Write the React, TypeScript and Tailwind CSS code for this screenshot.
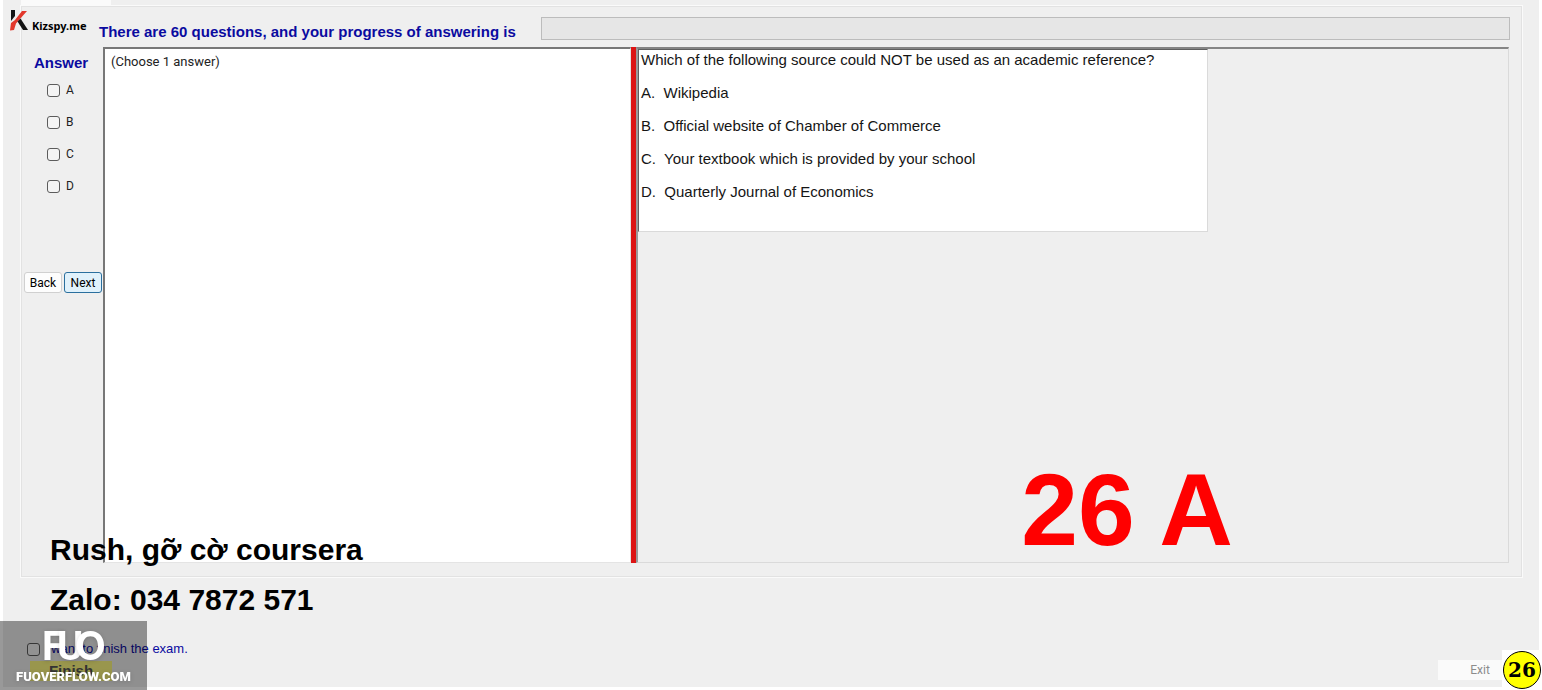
import type { ReactNode } from "react";

const choices = [
  { key: "A", text: "Wikipedia" },
  { key: "B", text: "Official website of Chamber of Commerce" },
  { key: "C", text: "Your textbook which is provided by your school" },
  { key: "D", text: "Quarterly Journal of Economics" },
];

const checkbox =
  "size-[13px] shrink-0 appearance-none rounded-[3px] border border-[#5c5c5c] bg-[#f4f4f4] checked:bg-[#0067c0]";

function KizspyLogo() {
  return (
    <div className="absolute left-[7px] top-[10px] flex items-end gap-1">
      <svg width="18" height="21" viewBox="0 0 18 21" aria-hidden="true">
        <path d="M1 0h4v6l-4 5z" fill="#151515" />
        <path d="M12 1h5L6 13.5 4 20l-4 .5L1 13l4-3z" fill="#e2382c" />
        <path d="M7.500 11.500l3-3L18 20h-5z" fill="#151515" />
      </svg>
      <span className="font-['Noto_Sans',sans-serif] text-[11px] leading-[10px] font-bold text-black">
        Kizspy.me
      </span>
    </div>
  );
}

function AnswerColumn() {
  return (
    <aside className="flex w-[81px] shrink-0 flex-col">
      <h2 className="mt-2 pl-3 text-[15px] leading-4 font-bold text-[#0a0aa0]">Answer</h2>
      <div className="mt-[11px] flex flex-col gap-4 pl-[25px]">
        {choices.map(({ key }) => (
          <label key={key} className="flex h-4 items-center gap-[6px] font-[Roboto,sans-serif] text-[12px] text-[#222]">
            <input type="checkbox" name={`answer-${key}`} className={checkbox} />
            {key}
          </label>
        ))}
      </div>
      <div className="mt-[78px] flex gap-[2px] pl-[2px]">
        <NavButton className="border-[#d0d0d0] bg-[#fdfdfd]">Back</NavButton>
        <NavButton className="border-[#2a6f9e] bg-[#e0f1fb]">Next</NavButton>
      </div>
    </aside>
  );
}

function NavButton({ children, className }: { children: ReactNode; className: string }) {
  return (
    <button
      type="button"
      className={`h-[21px] w-[38px] rounded-[3px] border font-[Roboto,sans-serif] text-[12px] leading-4 text-black ${className}`}
    >
      {children}
    </button>
  );
}

function QuestionPane() {
  return (
    <section className="min-w-0 flex-1 border-t-2 border-r border-b border-l-2 border-t-[#858585] border-r-[#dadada] border-b-[#dadada] border-l-[#9a9a9a]">
      <div className="flex w-[570px] max-w-full flex-col gap-4 border border-t-[#606060] border-r-[#dadada] border-b-[#dadada] border-l-[#606060] bg-white pb-[31px] pl-[2px] text-[15px] leading-[17px] text-[#151515]">
        <p className="pt-px">Which of the following source could NOT be used as an academic reference?</p>
        {choices.map(({ key, text }) => (
          <p key={key} className="whitespace-pre-wrap">
            {key}.{"  "}
            {text}
          </p>
        ))}
      </div>
    </section>
  );
}

function FuoWatermark() {
  return (
    <div className="absolute bottom-0 left-0 flex h-[69px] w-[147px] flex-col items-center bg-black/40 text-white">
      <svg width="70" height="46" viewBox="0 0 70 46" role="img" aria-label="FUO">
        <g fill="#fff" fontWeight="700" fontSize="40">
          <text x="3" y="39" fontFamily="Roboto, sans-serif" className="drop-shadow-sm">F</text>
          <text x="18" y="39" fontFamily="Roboto, sans-serif" className="drop-shadow-sm">U</text>
          <text x="36" y="39" fontFamily="Inter, sans-serif" className="drop-shadow-sm">O</text>
        </g>
      </svg>
      <span className="font-[Roboto,sans-serif] text-[13px] leading-5 font-black drop-shadow-sm">
        FUOVERFLOW.COM
      </span>
    </div>
  );
}

export default function App() {
  return (
    <div className="relative flex min-h-screen flex-col bg-white px-[3px] pb-[3px] font-['Liberation_Sans',Arial,sans-serif]">
      <main className="relative flex flex-1 flex-col bg-[#efefef]">
        <div className="ml-[18px] h-[6px] w-[90px] bg-[#fafafa]" />
        <div className="mr-[17px] ml-[18px] flex flex-1 flex-col border border-[#e2e2e2] pb-[13px] outline outline-1 outline-[#fafafa]">
          <header className="flex h-10 items-start pt-[10px] pr-[11px] pl-[77px]">
            <h1 className="mt-[7px] w-[442px] shrink-0 text-[15px] leading-4 font-bold whitespace-nowrap text-[#0a0aa0]">
              There are 60 questions, and your progress of answering is
            </h1>
            <div
              role="progressbar"
              aria-label="Answering progress"
              aria-valuenow={0}
              className="h-[23px] flex-1 border border-[#bcbcbc] bg-[#e6e6e6]"
            />
          </header>
          <div className="flex flex-1 pr-3">
            <AnswerColumn />
            <section className="w-[528px] shrink-0 border-t-2 border-r border-b border-l-2 border-t-[#777] border-r-[#e4e4e4] border-b-[#e4e4e4] border-l-[#777] bg-white pt-[5px] pl-[6px] font-[Roboto,sans-serif] text-[13px] leading-4 text-[#222]">
              (Choose 1 answer)
            </section>
            <div className="w-[5px] shrink-0 bg-[#dc1414]" />
            <QuestionPane />
          </div>
        </div>
        <footer className="flex h-[110px] shrink-0 items-end justify-between pl-6">
          <div className="flex flex-col pb-[6px]">
            <label className="flex items-center gap-1 text-[13px] leading-4 text-[#0a0aa0]">
              <input type="checkbox" name="finish" className={checkbox} />
              I want to finish the exam.
            </label>
            <button type="button" disabled className="mt-1 ml-[3px] h-5 w-[82px] bg-[#fffb80] text-[15px] leading-5 font-bold text-[#555]">
              Finish
            </button>
          </div>
          <button type="button" disabled className="mr-[37px] mb-[7px] h-5 w-[64px] bg-[#fafafa] pl-5 font-[Roboto,sans-serif] text-[12px] text-[#8c8c8c]">
            Exit
          </button>
        </footer>
        <KizspyLogo />
      </main>
      <div className="absolute bottom-[65px] left-[50px] text-[30px] leading-[50px] font-bold text-black">
        <p>Rush, gỡ cờ coursera</p>
        <p>Zalo: 034 7872 571</p>
      </div>
      <p className="absolute right-[309px] bottom-[130px] text-[102px] leading-[100px] font-bold whitespace-pre text-[#ff0000]">
        26 A
      </p>
      <FuoWatermark />
      <div className="absolute right-0 bottom-0 bg-white p-px">
        <div className="flex size-[38px] items-center justify-center rounded-full border border-black bg-[#ffff00] font-['DejaVu_Serif',serif] text-[20px] font-bold text-black">
          26
        </div>
      </div>
    </div>
  );
}
